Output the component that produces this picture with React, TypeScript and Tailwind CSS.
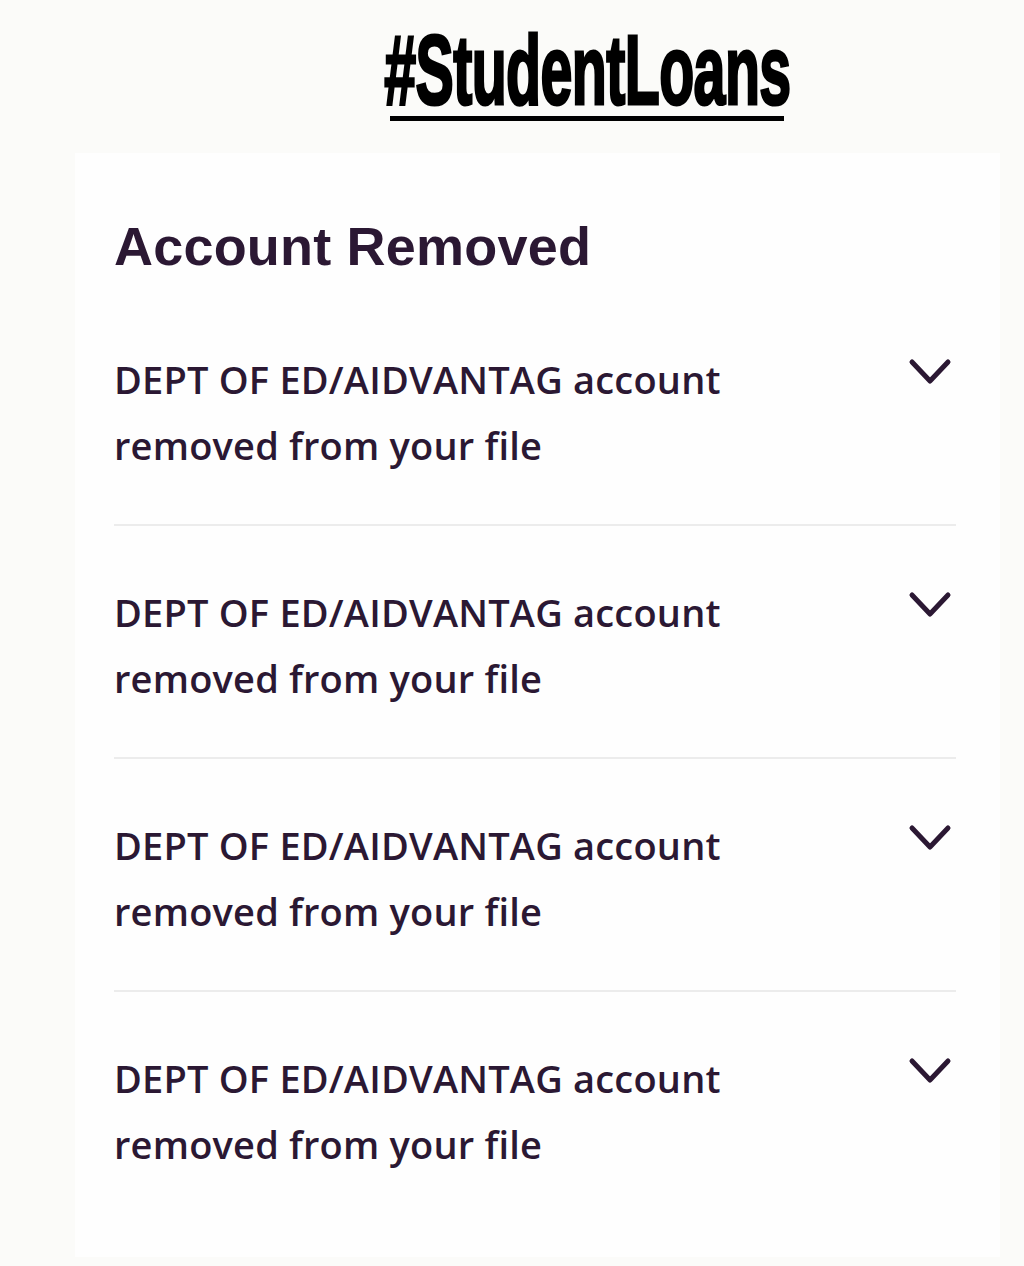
const items = [1, 2, 3, 4];

function Chevron() {
  return (
    <svg width="44" height="28" viewBox="0 0 44 28" fill="none" className="shrink-0 mt-[12px] mr-[4px]">
      <path d="M4 4 L22 23 L40 4" stroke="#2b1833" strokeWidth="5" strokeLinecap="round" strokeLinejoin="round" />
    </svg>
  );
}

export default function App() {
  return (
    <div className="min-h-[1266px] w-[1024px] bg-[#fbfbf9] overflow-hidden">
      <div className="flex justify-center pt-[22px] pl-[150px]">
        <div className="flex flex-col items-center">
          <h1
            className="text-[98px] leading-[96px] font-bold text-black tracking-[-1px] origin-center scale-x-[0.585] [-webkit-text-stroke:3px_black]"
            style={{ fontFamily: '"Liberation Sans Narrow", "Liberation Sans", Arial, sans-serif' }}
          >
            #StudentLoans
          </h1>
          <div className="h-[5px] w-[394px] bg-black mt-[-2px]" />
        </div>
      </div>

      <div
        className="mt-[32px] ml-[75px] w-[925px] bg-[#fefefe] pl-[39px] pr-[44px] pt-[60px] pb-[80px] text-[#2b1833]"
        style={{ fontFamily: '"Liberation Sans", Arial, sans-serif' }}
      >
        <h2 className="text-[54px] leading-[66px] font-bold tracking-[0.2px]">Account Removed</h2>

        <div className="mt-[67px]">
          {items.map((i, idx) => (
            <div
              key={i}
              className={
                "flex justify-between items-start " +
                (idx < items.length - 1 ? "border-b-2 border-[#ececec] pb-[46px] mb-[53px]" : "")
              }
            >
              <p
                className="text-[38px] leading-[66px] font-semibold tracking-[0.2px]"
                style={{ fontFamily: '"Open Sans", "Liberation Sans", sans-serif' }}
              >
                DEPT OF ED/AIDVANTAG account
                <br />
                removed from your file
              </p>
              <Chevron />
            </div>
          ))}
        </div>
      </div>
    </div>
  );
}
